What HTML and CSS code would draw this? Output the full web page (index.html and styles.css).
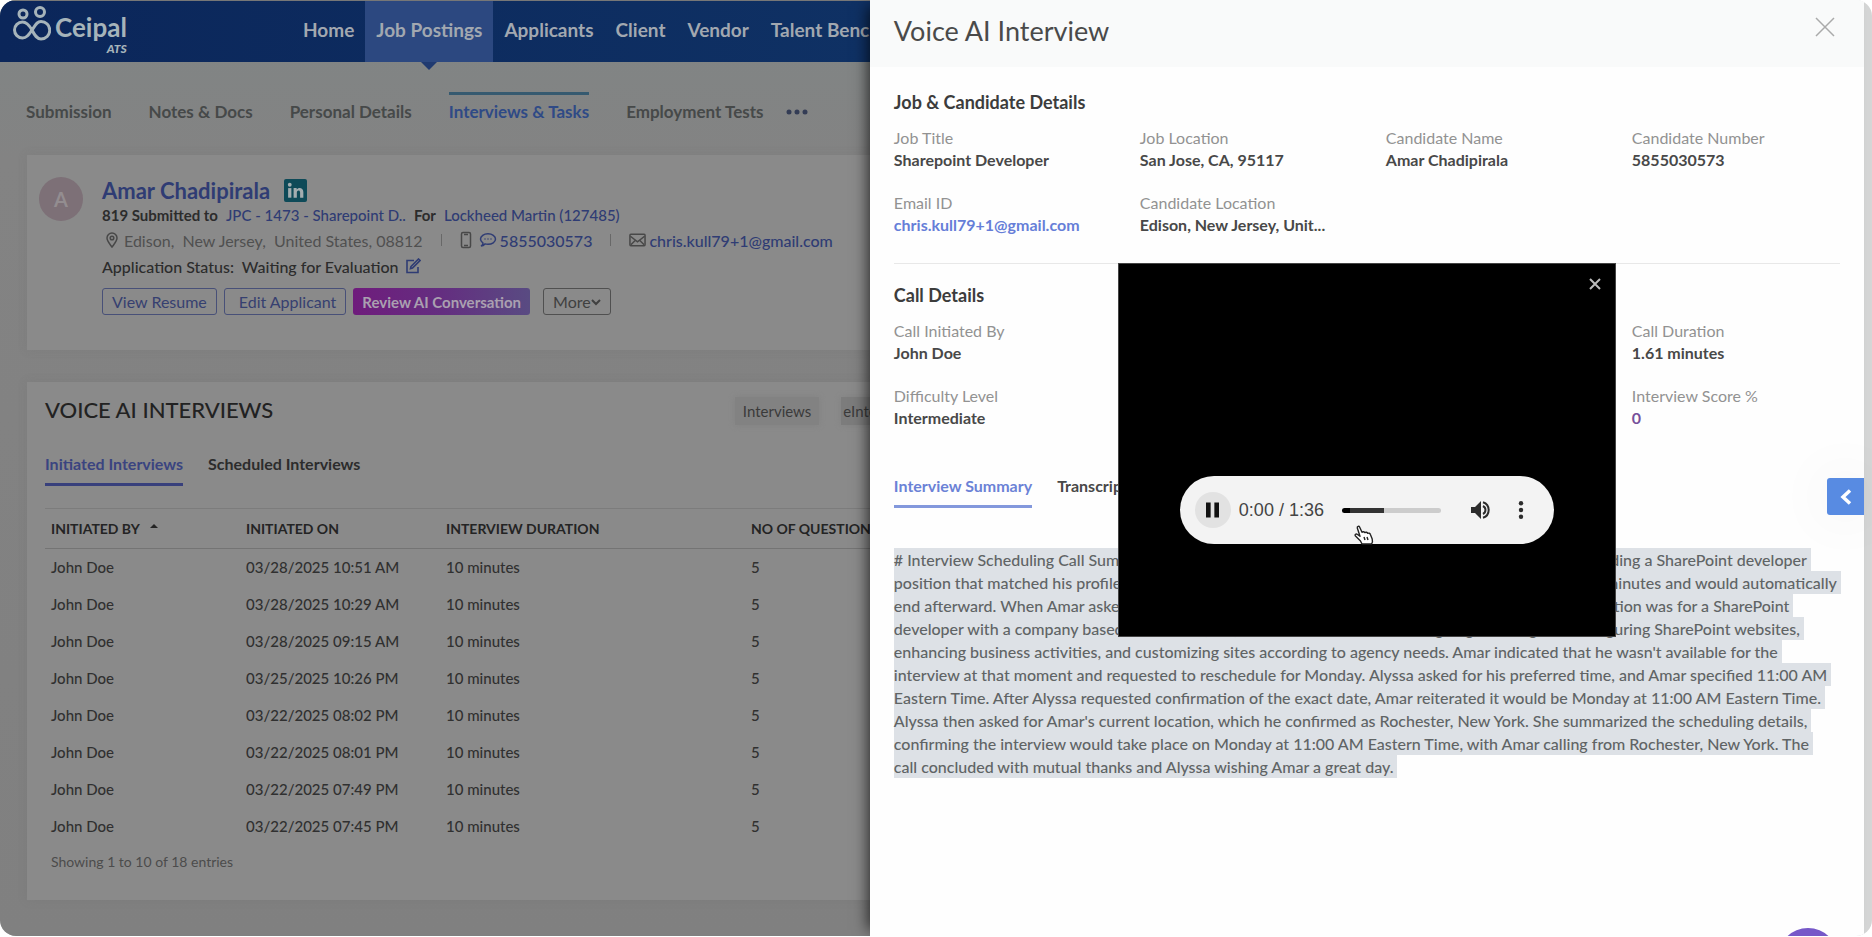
FILE: index.html
```html
<!DOCTYPE html>
<html lang="en">
<head>
<meta charset="utf-8">
<title>Voice AI Interview</title>
<link rel="stylesheet" href="styles.css">
</head>
<body>
<div class="app">
  <div class="workspace">
    <header class="topbar">
      <div class="brand">
        <svg class="brand-mark" viewBox="0 0 38 36" fill="none" stroke="currentColor" stroke-width="3">
          <circle cx="10" cy="9" r="4"/><circle cx="27" cy="7" r="4.500"/>
          <path d="M19 25C15 18 12 17 9.500 17a8 8 0 0 0 0 16c4 0 6-3 9.500-8s5-8.500 9-8.500a8.700 8.700 0 0 1 0 17.500c-4 0-6-3-9-9Z"/>
        </svg>
        <div class="brand-text"><span class="brand-name">Ceipal</span><span class="brand-sub">ATS</span></div>
      </div>
      <nav class="mainnav">
        <a href="#">Home</a><a href="#" class="active">Job Postings</a><a href="#">Applicants</a><a href="#">Client</a><a href="#">Vendor</a><a href="#">Talent Bench</a>
      </nav>
    </header>
    <nav class="subnav">
      <a href="#">Submission</a><a href="#">Notes &amp; Docs</a><a href="#">Personal Details</a><a href="#" class="active">Interviews &amp; Tasks</a><a href="#">Employment Tests</a>
      <button class="dots" aria-label="More tabs"><svg viewBox="0 0 22 6" fill="currentColor"><circle cx="3" cy="3" r="2.500"/><circle cx="11" cy="3" r="2.500"/><circle cx="19" cy="3" r="2.500"/></svg></button>
    </nav>
    <section class="card profile">
      <div class="avatar">A</div>
      <div class="profile-body">
        <div class="name-row"><a href="#">Amar Chadipirala</a>
          <svg class="linkedin" viewBox="0 0 24 24"><rect width="24" height="24" rx="2" fill="#0e4a58"/><g fill="#a3adb0"><circle cx="6" cy="6" r="2"/><rect x="4.300" y="9.500" width="3.400" height="10"/><path d="M10 9.500h3.200v1.400c1.800-2.700 7-2.200 7 2.600v6h-3.400v-5.300c0-3-3.400-2.700-3.400 0v5.300H10Z"/></g></svg>
        </div>
        <div class="line submitted"><b>819 Submitted to</b> <a href="#">JPC - 1473 - Sharepoint D..</a> <b>For</b> <a href="#">Lockheed Martin (127485)</a></div>
        <div class="line contact">
          <svg class="i-pin" viewBox="0 0 14 16" fill="none" stroke="currentColor" stroke-width="1.500"><path d="M7 15C4 11 2 9 2 6a5 5 0 0 1 10 0c0 3-2 5-5 9Z"/><circle cx="7" cy="6" r="1.800"/></svg>
          <span class="muted place">Edison,&nbsp; New Jersey,&nbsp; United States, 08812</span>
          <span class="sep"></span>
          <svg class="i-phone" viewBox="0 0 12 18" fill="none" stroke="currentColor" stroke-width="1.500"><rect x="1.500" y="1.500" width="9" height="15" rx="1.500"/><path d="M4 14.500h4M4 3.500h4"/></svg>
          <svg class="i-chat link" viewBox="0 0 18 16" fill="none" stroke="currentColor" stroke-width="1.500"><path d="M2 14c1.500-.8 2-1.800 2-2.800C2.500 10 1.500 8.700 1.500 7c0-3 3.400-5.200 7.500-5.200S16.500 4 16.500 7 13 12.300 9 12.300c-1 0-2 0-3-.4-1 1.100-2.400 2-4 2.100Z"/><path d="M5.500 7h1M8.500 7h1M11.500 7h1"/></svg>
          <a href="#">5855030573</a>
          <span class="sep"></span>
          <svg class="i-mail" viewBox="0 0 18 14" fill="none" stroke="currentColor" stroke-width="1.600"><rect x="1" y="1" width="16" height="12" rx="1"/><path d="m1.500 3 7.500 6 7.500-6M2 12l4.500-4.500M16 12l-4.500-4.500"/></svg>
          <a href="#">chris.kull79+1@gmail.com</a>
        </div>
        <div class="line">Application Status:&nbsp; Waiting for Evaluation
          <svg class="i-edit link" viewBox="0 0 16 16" fill="none" stroke="currentColor" stroke-width="1.600"><path d="M9 2.500H2v12h11V9"/><path d="m6 8.500 7.500-7.500 1.500 1.500L7.500 10l-2 .6Z"/></svg>
        </div>
        <div class="actions">
          <button class="btn">View Resume</button><button class="btn edit">Edit Applicant</button><button class="btn gradient">Review AI Conversation</button><button class="btn more">More<svg viewBox="0 0 10 8" fill="none" stroke="currentColor" stroke-width="2"><path d="m1 2 4 4 4-4"/></svg></button>
        </div>
      </div>
    </section>
    <section class="card interviews">
      <div class="card-head"><h2>VOICE AI INTERVIEWS</h2><div class="chips"><button class="chip">Interviews</button><button class="chip dark">eInterviews</button></div></div>
      <div class="tabs"><button class="tab active">Initiated Interviews</button><button class="tab">Scheduled Interviews</button></div>
      <table>
        <thead><tr><th class="c1">INITIATED BY <svg class="caret" viewBox="0 0 10 5"><path d="M1 5 5 1l4 4Z" fill="currentColor"/></svg></th><th class="c2">INITIATED ON</th><th class="c3">INTERVIEW DURATION</th><th>NO OF QUESTIONS</th></tr></thead>
        <tbody>
          <tr><td>John Doe</td><td>03/28/2025 10:51 AM</td><td>10 minutes</td><td>5</td></tr>
          <tr><td>John Doe</td><td>03/28/2025 10:29 AM</td><td>10 minutes</td><td>5</td></tr>
          <tr><td>John Doe</td><td>03/28/2025 09:15 AM</td><td>10 minutes</td><td>5</td></tr>
          <tr><td>John Doe</td><td>03/25/2025 10:26 PM</td><td>10 minutes</td><td>5</td></tr>
          <tr><td>John Doe</td><td>03/22/2025 08:02 PM</td><td>10 minutes</td><td>5</td></tr>
          <tr><td>John Doe</td><td>03/22/2025 08:01 PM</td><td>10 minutes</td><td>5</td></tr>
          <tr><td>John Doe</td><td>03/22/2025 07:49 PM</td><td>10 minutes</td><td>5</td></tr>
          <tr><td>John Doe</td><td>03/22/2025 07:45 PM</td><td>10 minutes</td><td>5</td></tr>
        </tbody>
      </table>
      <p class="entries">Showing 1 to 10 of 18 entries</p>
    </section>
  </div>

  <aside class="drawer">
    <header class="drawer-head"><h1>Voice AI Interview</h1>
      <button class="close" aria-label="Close panel"><svg viewBox="0 0 20 20" fill="none" stroke="currentColor" stroke-width="1.500"><path d="m1 1 18 18M19 1 1 19"/></svg></button>
    </header>
    <div class="drawer-body">
      <section class="details">
        <h3>Job &amp; Candidate Details</h3>
        <dl>
          <div><dt>Job Title</dt><dd>Sharepoint Developer</dd></div>
          <div><dt>Job Location</dt><dd>San Jose, CA, 95117</dd></div>
          <div><dt>Candidate Name</dt><dd>Amar Chadipirala</dd></div>
          <div><dt>Candidate Number</dt><dd>5855030573</dd></div>
          <div><dt>Email ID</dt><dd><a href="#">chris.kull79+1@gmail.com</a></dd></div>
          <div><dt>Candidate Location</dt><dd>Edison, New Jersey, Unit...</dd></div>
        </dl>
      </section>
      <section class="details call">
        <h3>Call Details</h3>
        <dl>
          <div class="col1"><dt>Call Initiated By</dt><dd>John Doe</dd></div>
          <div class="col4"><dt>Call Duration</dt><dd>1.61 minutes</dd></div>
          <div class="col1"><dt>Difficulty Level</dt><dd>Intermediate</dd></div>
          <div class="col4"><dt>Interview Score %</dt><dd class="score">0</dd></div>
        </dl>
      </section>
      <div class="tabs"><button class="tab active">Interview Summary</button><button class="tab">Transcript</button></div>
      <p class="summary"><mark># Interview Scheduling Call Summary Alyssa, an AI interviewer from the company, called Amar C. regarding a SharePoint developer<br>
position that matched his profile. She explained that the interview would take about ten to fifteen 15 minutes and would automatically<br>
end afterward. When Amar asked about the role and the employer, Alyssa explained that the open position was for a SharePoint<br>
developer with a company based in San Jose, CA, with duties such as the designing, building and configuring SharePoint websites,<br>
enhancing business activities, and customizing sites according to agency needs. Amar indicated that he wasn't available for the<br>
interview at that moment and requested to reschedule for Monday. Alyssa asked for his preferred time, and Amar specified 11:00 AM<br>
Eastern Time. After Alyssa requested confirmation of the exact date, Amar reiterated it would be Monday at 11:00 AM Eastern Time.<br>
Alyssa then asked for Amar's current location, which he confirmed as Rochester, New York. She summarized the scheduling details,<br>
confirming the interview would take place on Monday at 11:00 AM Eastern Time, with Amar calling from Rochester, New York. The<br>
call concluded with mutual thanks and Alyssa wishing Amar a great day.</mark></p>
    </div>

    <div class="modal" role="dialog" aria-label="Call recording">
      <button class="modal-close" aria-label="Close recording"><svg viewBox="0 0 12 12" fill="none" stroke="currentColor" stroke-width="2"><path d="m1 1 10 10M11 1 1 11"/></svg></button>
      <div class="player">
        <button class="pause" aria-label="Pause"><svg viewBox="0 0 14 16" fill="currentColor"><path d="M0 0h5v16H0ZM9 0h5v16H9Z"/></svg></button>
        <span class="time">0:00 / 1:36</span>
        <input class="seek" type="range" min="0" max="96" value="0" aria-label="Seek">
        <button class="volume" aria-label="Mute"><svg viewBox="0 0 20 18"><path d="M0 6h4l6-6v18l-6-6H0Z" fill="currentColor"/><path d="M12 5a4.500 4.500 0 0 1 0 8M12 1.200a8.200 8.200 0 0 1 0 15.600" fill="none" stroke="currentColor" stroke-width="2"/></svg></button>
        <button class="menu" aria-label="Player options"><svg viewBox="0 0 6 18" fill="currentColor"><circle cx="3" cy="2.200" r="2.200"/><circle cx="3" cy="9" r="2.200"/><circle cx="3" cy="15.800" r="2.200"/></svg></button>
        <svg class="cursor" viewBox="0 0 20 20" fill="#fff" stroke="#222" stroke-width="1.400" stroke-linejoin="round"><path d="M8 19 6.500 16 1.500 11c-1.200-1.500.6-2.600 2-1.500L6 11.300 3.300 3C3 1.200 5 .7 5.700 2.300l2.300 5c1-1 2.300-.7 2.800.3 1-.8 2.400-.4 2.800.7 1.200-.5 2.500 0 2.800 1.200l1.800 4.500c.6 2 .2 3.600-.7 5Z"/><path d="m10 12 1 3M13 12l1 3" fill="none"/></svg>
      </div>
    </div>
    <button class="expand" aria-label="Expand side panel"><svg viewBox="0 0 12 16" fill="none" stroke="currentColor" stroke-width="3.500"><path d="M10 1.500 3 8l7 6.500"/></svg></button>
    <button class="help" aria-label="Help"></button>
  </aside>
</div>
</body>
</html>
```
FILE: styles.css
```css
* { box-sizing: border-box; }
body { margin: 0; background: #fff; font-family: Lato, "Open Sans", sans-serif; font-size: 15px; color: #2c2c2c; }
a { text-decoration: none; color: #2f3c74; }
button { font: inherit; background: none; border: 0; padding: 0; color: inherit; }
h1, h2, h3, p, dl, dd { margin: 0; }
svg { display: block; flex: none; }

.app { display: flex; height: calc(100vh - 1px); border-radius: 16px; overflow: hidden; background: #d5d6d6; padding-right: 8px; }
.workspace { flex: 7 1 0; min-width: 0; overflow: hidden; background: linear-gradient(#808585, #838383 160px, #808080); }
.drawer { flex: 8 1 0; min-width: 0; position: relative; background: #fefefe; box-shadow: -8px 0 14px -6px rgba(0, 0, 0, .7); }

.topbar { display: flex; height: 62px; background: linear-gradient(90deg, #0b265a, #0f3164); color: #a2a8b0; border-top: 1px solid #777; }
.brand { display: flex; flex: none; width: 292px; padding: 4px 0 0 13px; gap: 4px; color: #a6b4ba; }
.brand-mark { width: 38px; height: 36px; }
.brand-text { display: flex; flex-direction: column; align-items: flex-end; height: 56px; }
.brand-name { font-size: 26px; line-height: 30px; font-weight: 700; padding-top: 7px; }
.brand-sub { font-size: 12px; line-height: 14px; font-weight: 900; font-style: italic; }
.mainnav { display: flex; flex: none; }
.mainnav a { position: relative; padding: 0 11px; line-height: 58px; font-size: 19px; font-weight: 700; color: inherit; white-space: nowrap; }
.mainnav .active { background: #2c4880; }
.mainnav .active::after { content: ""; position: absolute; left: 50%; top: 61px; margin-left: -8px; border: 8px solid transparent; border-top-color: #203a70; border-bottom: 0; }

.subnav { display: flex; gap: 37px; padding: 30px 26px 0; height: 93px; white-space: nowrap; }
.subnav a { height: 40px; line-height: 34px; border-top: 3px solid transparent; font-size: 17px; font-weight: 700; color: #464949; }
.subnav .active { color: #2f4a86; border-top-color: #365a70; }
.dots { height: 40px; margin-left: -14px; color: #333c55; }
.dots svg { width: 22px; height: 6px; }

.card { margin-left: 27px; background: #8a8a8a; box-shadow: 0 0 8px rgba(110, 110, 110, .25); }
.profile { display: flex; height: 195px; padding: 22px 0 0 12px; gap: 19px; }
.avatar { width: 44px; flex: none; height: 44px; border-radius: 50%; background: #7d7077; color: #938d90; font-size: 20px; font-weight: 700; line-height: 44px; text-align: center; }
.profile-body { white-space: nowrap; }
.name-row { display: flex; align-items: center; gap: 14px; height: 26px; font-size: 22px; font-weight: 700; }
.linkedin { width: 23px; height: 23px; }
.line { display: flex; align-items: center; gap: 6px; height: 26px; font-size: 16px; font-weight: 500; }
.submitted { height: 24px; font-size: 15px; gap: 8px; }
.contact { gap: 3px; color: #484848; padding-left: 3px; }
.link { color: #2f3c74; }
.muted { color: #505050; font-weight: 400; }
.place { padding-left: 2px; }
.sep { width: 1px; height: 12px; margin: 0 15px; background: #686868; }
.i-pin { width: 14px; height: 16px; }
.i-phone { width: 12px; height: 18px; }
.i-chat { width: 18px; height: 16px; margin-left: 4px; }
.i-mail { width: 17px; height: 14px; }
.i-edit { width: 16px; height: 16px; }
.actions { display: flex; gap: 7px; padding-top: 9px; }
.btn { height: 27px; padding: 0 9px; border: 1px solid #485078; border-radius: 3px; font-size: 16px; color: #364070; white-space: nowrap; }
.edit { padding-left: 14px; }
.gradient { border: 0; background: linear-gradient(90deg, #6f1c7c, #642e80 50%, #594b82); color: #aaa0b0; font-size: 15px; font-weight: 700; }
.more { display: flex; align-items: center; margin-left: 6px; border-color: #505050; color: #404040; }
.more svg { width: 10px; height: 8px; }

.interviews { margin-top: 32px; height: 518px; padding: 13px 0 0 18px; }
.card-head { display: flex; justify-content: space-between; white-space: nowrap; }
h2 { font-size: 22px; line-height: 30px; font-weight: 500; color: #222; }
.chips { display: flex; gap: 22px; width: 135px; margin-top: 2px; }
.chip { flex: none; height: 28px; padding: 0 8px; background: #828282; box-shadow: 0 0 6px #828282; color: #3a3a3a; }
.dark { background: #7c7c7c; padding: 0 2px; }
.tabs { display: flex; gap: 25px; }
.tab { height: 32px; padding-bottom: 10px; border-bottom: 3px solid transparent; font-size: 16px; line-height: 19px; font-weight: 700; white-space: nowrap; }
.interviews .tabs { margin-top: 29px; }
.interviews .tab.active { color: #3a4480; border-color: #38407c; }
table { width: 100%; margin-top: 22px; border-collapse: collapse; table-layout: fixed; border-top: 1px solid #7c7c7c; }
th { height: 40px; padding: 0 0 0 6px; border-bottom: 1px solid #747474; text-align: left; font-size: 14px; font-weight: 700; color: #242424; white-space: nowrap; }
.c1 { width: 195px; }
.c2 { width: 200px; }
.c3 { width: 305px; }
.caret { display: inline-block; width: 10px; height: 5px; margin: 0 0 6px 6px; }
td { height: 37px; padding: 0 0 0 6px; font-size: 15px; font-weight: 500; color: #303030; white-space: nowrap; }
.entries { padding: 8px 6px; font-size: 14px; line-height: 18px; color: #4c4c4c; }

.drawer-head { display: flex; justify-content: space-between; height: 67px; padding: 15px 29px 0 24px; background: #f9fafa; }
h1 { font-size: 27px; line-height: 32px; font-weight: 400; color: #4a4a4a; }
.close { height: 20px; margin-top: 2px; color: #aaa; }
.close svg { width: 20px; height: 20px; }
.drawer-body { padding: 24px 24px 0; }
.drawer a { color: #667ed8; }
h3 { font-size: 18px; line-height: 22px; font-weight: 700; color: #3c3c3c; }
.details { border-bottom: 1px solid #e8e8e8; height: 173px; }
.details dl { display: grid; grid-template-columns: repeat(4, 26%); row-gap: 21px; padding-top: 14px; }
dt { font-size: 16px; line-height: 22px; color: #929292; }
dd { font-size: 16px; line-height: 22px; font-weight: 700; color: #484848; white-space: nowrap; }
.call { border: 0; padding-top: 20px; height: 212px; }
.col1 { grid-column: 1; }
.col4 { grid-column: 4; }
.details .score { color: #76509a; }
.drawer .tabs { color: #484848; }
.drawer .tab.active { color: #6b82d6; border-color: #8398dc; }
.summary { padding-top: 40px; font-size: 16px; line-height: 23px; font-weight: 500; white-space: nowrap; }
mark { background: #dde1e6; color: #606465; padding: 2px 4px 2px 0; -webkit-box-decoration-break: clone; box-decoration-break: clone; }

.modal { position: absolute; left: 248px; top: 263px; width: 498px; height: 374px; background: #000; border: 1px solid #444; }
.modal-close { position: absolute; right: 14px; top: 14px; color: #bbb; }
.modal-close svg { width: 12px; height: 12px; }
.player { position: absolute; left: 61px; top: 212px; width: 374px; height: 68px; display: flex; align-items: center; padding: 0 30px 0 15px; border-radius: 34px; background: #f3f3f3; }
.pause { display: flex; align-items: center; justify-content: center; width: 36px; height: 36px; border-radius: 50%; background: #e2e2e2; color: #111; }
.pause svg { width: 13px; height: 16px; }
.time { margin-left: 8px; font: 18px "Liberation Sans", sans-serif; color: #444; white-space: nowrap; }
.seek { appearance: none; flex: 1; min-width: 0; height: 5px; margin: 0 30px 0 18px; border-radius: 3px; background: linear-gradient(90deg, #000 8%, #333 8%, #333 42%, #ccc 42%); }
.seek::-webkit-slider-thumb { appearance: none; width: 0; height: 0; }
.volume svg { width: 20px; height: 18px; }
.menu { margin-left: 27px; }
.menu svg { width: 6px; height: 18px; }
.cursor { position: absolute; left: 174px; top: 49px; width: 20px; height: 20px; }
.expand { position: absolute; right: 0; top: 478px; width: 37px; height: 37px; display: flex; align-items: center; justify-content: center; border-radius: 3px 0 0 3px; background: #588be2; color: #fff; box-shadow: 0 0 60px rgba(0, 0, 0, .07); }
.expand svg { width: 12px; height: 16px; }
.help { position: absolute; right: 26px; bottom: -52px; width: 60px; height: 60px; border-radius: 50%; background: #7658c8; }
```
